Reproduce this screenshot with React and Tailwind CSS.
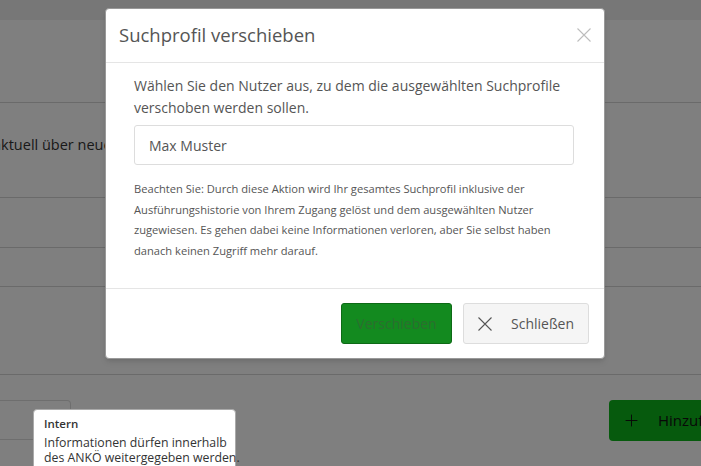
import { Plus } from "lucide-react";

const font = { fontFamily: '"Open Sans", "Noto Sans", sans-serif' };

// thin cross used in the dialog header and the close button
function Cross({ size = 14, color = "#555", width = 1.1 }) {
  return (
    <svg width={size} height={size} viewBox="0 0 14 14" fill="none" stroke={color} strokeWidth={width}>
      <path d="M0.5 0.5 L13.5 13.5 M13.5 0.5 L0.5 13.5" />
    </svg>
  );
}

function BackgroundPage() {
  return (
    <div className="bg-white h-[466px] overflow-hidden text-[#333]">
      <div className="h-[20px] bg-[#eeeeee]" />
      <div className="h-[83px] border-b border-[#d4d4d4]" />
      <div className="h-[95px] border-b border-[#d4d4d4] flex items-center pb-[11px]">
        <div className="-ml-[7px] text-[14.5px] whitespace-nowrap">
          aktuell über neue Ausschreibungen informiert werden möchten.
        </div>
      </div>
      <div className="h-[50px] border-b border-[#d4d4d4]" />
      <div className="h-[39px] border-b border-[#d4d4d4]" />
      <div className="h-[88px] border-b border-[#d4d4d4]" />
      <div className="flex items-start justify-between pt-[25px]">
        <div className="w-[71px] h-[40px] border border-[#dddddd] rounded-r-[4px] border-l-0" />
        <button className="h-[41px] w-[120px] shrink-0 bg-[#0cb41a] rounded-[4px] flex items-center gap-[17px] pl-[13px] text-[15px] text-[#111] -mr-[28px]">
          <Plus size={19} strokeWidth={1.2} className="shrink-0" />
          <span>Hinzufügen</span>
        </button>
      </div>
    </div>
  );
}

export default function App() {
  return (
    <div className="relative w-[701px] h-[466px] overflow-hidden" style={font}>
      <BackgroundPage />
      <div className="absolute inset-0 bg-black/50" />

      <div className="absolute left-[105px] top-[8px] w-[500px] h-[351px] bg-white rounded-[4px] border border-[#999] shadow-md flex flex-col">
        <div className="h-[54px] flex items-center justify-between pl-[13px] pr-[13px] border-b border-[#e5e5e5]">
          <div className="text-[18.5px] text-[#555] pb-[2px]">Suchprofil verschieben</div>
          <div className="pb-[2px]">
            <Cross size={14} color="#bdbdbd" width={1.1} />
          </div>
        </div>
        <div className="flex-1 pl-[28px] pr-[30px] pt-[12px]">
          <p className="text-[14px] leading-[22px] text-[#555]">
            Wählen Sie den Nutzer aus, zu dem die ausgewählten Suchprofile verschoben werden sollen.
          </p>
          <div className="mt-[6px] h-[40px] border border-[#dddddd] rounded-[3px] flex items-center px-[14px] text-[14px] text-[#555]">
            Max Muster
          </div>
          <p className="mt-[14px] text-[11.15px] leading-[20.7px] text-[#555] pr-[6px]">
            Beachten Sie: Durch diese Aktion wird Ihr gesamtes Suchprofil inklusive der Ausführungshistorie von Ihrem Zugang gelöst und dem ausgewählten Nutzer zugewiesen. Es gehen dabei keine Informationen verloren, aber Sie selbst haben danach keinen Zugriff mehr darauf.
          </p>
        </div>
        <div className="h-[70px] border-t border-[#e5e5e5] flex items-start justify-end gap-[11px] pt-[14px] pr-[15px]">
          <button className="h-[41px] w-[111px] bg-[#138a1f] border border-[#0d6a16] rounded-[3px] text-[14px] text-[#2c6e2f]">
            Verschieben
          </button>
          <button className="h-[41px] w-[126px] bg-[#f5f5f5] border border-[#dddddd] rounded-[3px] text-[14px] text-[#555] flex items-center pl-[14px] gap-[19px]">
            <Cross size={14} color="#555" width={1.1} />
            <span>Schließen</span>
          </button>
        </div>
      </div>

      <div className="absolute left-[33px] top-[409px] w-[203px] h-[80px] bg-white rounded-[4px] border border-[#aaa] pl-[10px] pr-[2px] pt-[6px] text-[#333]">
        <div className="text-[11.5px] font-semibold leading-[16px]">Intern</div>
        <div className="mt-[3px] text-[12.3px] leading-[15px] whitespace-nowrap">
          <div>Informationen dürfen innerhalb</div>
          <div>des ANKÖ weitergegeben werden.</div>
          <div>Es liegen jedoch Beschränkungen</div>
        </div>
      </div>
    </div>
  );
}
